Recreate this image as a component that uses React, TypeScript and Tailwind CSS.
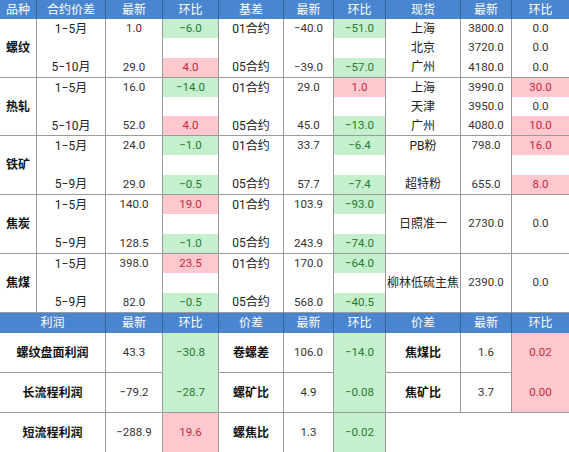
import React from "react";

type Tone = "g" | "r" | undefined;
type Val = { v: string; t?: Tone };
type Sub = [string, string, Val] | null;

interface Block {
  name: string;
  h: string;
  spread: Sub[];
  basis: Sub[];
  spot: Sub[];
  merged?: boolean;
}

const g = (v: string): Val => ({ v, t: "g" });
const r = (v: string): Val => ({ v, t: "r" });
const n = (v: string): Val => ({ v });

const blocks: Block[] = [
  {
    name: "螺纹",
    h: "h-[59px]",
    spread: [["1−5月", "1.0", g("−6.0")], null, ["5−10月", "29.0", r("4.0")]],
    basis: [["01合约", "−40.0", g("−51.0")], null, ["05合约", "−39.0", g("−57.0")]],
    spot: [
      ["上海", "3800.0", n("0.0")],
      ["北京", "3720.0", n("0.0")],
      ["广州", "4180.0", n("0.0")],
    ],
  },
  {
    name: "热轧",
    h: "h-[58px]",
    spread: [["1−5月", "16.0", g("−14.0")], null, ["5−10月", "52.0", r("4.0")]],
    basis: [["01合约", "29.0", r("1.0")], null, ["05合约", "45.0", g("−13.0")]],
    spot: [
      ["上海", "3990.0", r("30.0")],
      ["天津", "3950.0", n("0.0")],
      ["广州", "4080.0", r("10.0")],
    ],
  },
  {
    name: "铁矿",
    h: "h-[59px]",
    spread: [["1−5月", "24.0", g("−1.0")], null, ["5−9月", "29.0", g("−0.5")]],
    basis: [["01合约", "33.7", g("−6.4")], null, ["05合约", "57.7", g("−7.4")]],
    spot: [["PB粉", "798.0", r("16.0")], null, ["超特粉", "655.0", r("8.0")]],
  },
  {
    name: "焦炭",
    h: "h-[59px]",
    spread: [["1−5月", "140.0", r("19.0")], null, ["5−9月", "128.5", g("−1.0")]],
    basis: [["01合约", "103.9", g("−93.0")], null, ["05合约", "243.9", g("−74.0")]],
    spot: [["日照准一", "2730.0", n("0.0")]],
    merged: true,
  },
  {
    name: "焦煤",
    h: "h-[59px]",
    spread: [["1−5月", "398.0", r("23.5")], null, ["5−9月", "82.0", g("−0.5")]],
    basis: [["01合约", "170.0", g("−64.0")], null, ["05合约", "568.0", g("−40.5")]],
    spot: [["柳林低硫主焦", "2390.0", n("0.0")]],
    merged: true,
  },
];

// profit / ratio rows at the bottom
const lower: ([string, string, Val] | null)[][] = [
  [
    ["螺纹盘面利润", "43.3", g("−30.8")],
    ["卷螺差", "106.0", g("−14.0")],
    ["焦煤比", "1.6", r("0.02")],
  ],
  [
    ["长流程利润", "−79.2", g("−28.7")],
    ["螺矿比", "4.9", g("−0.08")],
    ["焦矿比", "3.7", r("0.00")],
  ],
  [["短流程利润", "−288.9", r("19.6")], ["螺焦比", "1.3", g("−0.02")], null],
];

const line = "border-[#9a9a9a]";

function toneClass(t: Tone) {
  if (t === "g") return "bg-[#c6efce] text-[#237a30]";
  if (t === "r") return "bg-[#ffc7ce] text-[#c8283c]";
  return "text-[#333]";
}

function Group({ cols, rows, merged, last }: { cols: string; rows: Sub[]; merged?: boolean; last?: boolean }) {
  const span = merged ? "row-span-3" : "";
  return (
    <div className={`grid ${cols} grid-rows-3`}>
      {rows.flatMap((row, i) => {
        const cells = row ?? ["", "", n("")];
        return [
          <div key={`${i}a`} className={`${span} border-r ${line} flex items-center justify-center text-[#222]`}>
            {cells[0]}
          </div>,
          <div key={`${i}b`} className={`${span} border-r ${line} flex items-center justify-center text-[11.5px] text-[#333]`}>
            {cells[1]}
          </div>,
          <div
            key={`${i}c`}
            className={`${span} ${last ? "" : `border-r ${line}`} flex items-center justify-center text-[11.5px] ${toneClass(cells[2].t)}`}
          >
            {cells[2].v}
          </div>,
        ];
      })}
    </div>
  );
}

function HeadCell({ label, w, last }: { label: string; w: string; last?: boolean }) {
  return (
    <div className={`${w} flex items-center justify-center ${last ? "" : "border-r border-[#3b639b]"}`}>{label}</div>
  );
}

function LowerCell({ cell, last, bottom }: { cell: [string, string, Val] | null; last?: boolean; bottom?: boolean }) {
  if (!cell) {
    return (
      <>
        <div />
        <div />
        <div />
      </>
    );
  }
  const [label, value, ch] = cell;
  const bb = bottom ? "" : "border-b";
  const chBorder = ch.t === "g" ? "border-b-[#c6efce]" : "border-b-[#ffc7ce]";
  return (
    <>
      <div className={`${bb} border-r ${line} flex items-center justify-center font-bold text-[#111]`}>{label}</div>
      <div className={`${bb} border-r ${line} flex items-center justify-center text-[11.5px] text-[#333]`}>{value}</div>
      <div
        className={`${bb} ${last ? "" : "border-r"} ${line} ${chBorder} flex items-center justify-center text-[11.5px] ${toneClass(ch.t)}`}
      >
        {ch.v}
      </div>
    </>
  );
}

export default function App() {
  return (
    <div className="w-[569px] h-[452px] overflow-hidden bg-white font-[Roboto,'Noto_Sans_CJK_SC',sans-serif] text-[12px] leading-none">
      {/* upper table header */}
      <div className="flex h-[19px] bg-[#4a86cf] text-white">
        <HeadCell label="品种" w="w-[37px]" />
        <HeadCell label="合约价差" w="w-[69px]" />
        <HeadCell label="最新" w="w-[57px]" />
        <HeadCell label="环比" w="w-[56px]" />
        <HeadCell label="基差" w="w-[65px]" />
        <HeadCell label="最新" w="w-[50px]" />
        <HeadCell label="环比" w="w-[52px]" />
        <HeadCell label="现货" w="w-[75px]" />
        <HeadCell label="最新" w="w-[51px]" />
        <HeadCell label="环比" w="w-[57px]" last />
      </div>

      {blocks.map((b) => (
        <div key={b.name} className={`flex ${b.h} border-b ${line}`}>
          <div className={`w-[37px] border-r ${line} flex items-center justify-center font-bold text-[#111]`}>
            {b.name}
          </div>
          <Group cols="grid-cols-[69px_57px_56px]" rows={b.spread} />
          <Group cols="grid-cols-[65px_50px_52px]" rows={b.basis} />
          <Group cols="grid-cols-[75px_51px_57px]" rows={b.spot} merged={b.merged} last />
        </div>
      ))}

      {/* lower table header */}
      <div className="flex h-[20px] bg-[#4a86cf] text-white">
        <HeadCell label="利润" w="w-[106px]" />
        <HeadCell label="最新" w="w-[57px]" />
        <HeadCell label="环比" w="w-[56px]" />
        <HeadCell label="价差" w="w-[65px]" />
        <HeadCell label="最新" w="w-[50px]" />
        <HeadCell label="环比" w="w-[52px]" />
        <HeadCell label="价差" w="w-[75px]" />
        <HeadCell label="最新" w="w-[51px]" />
        <HeadCell label="环比" w="w-[57px]" last />
      </div>

      {lower.map((row, i) => (
        <div
          key={i}
          className={`grid grid-cols-[106px_57px_56px_65px_50px_52px_75px_51px_57px] ${i === 2 ? "h-[39px]" : "h-[40px]"} ${
            i === 1 ? `border-b ${line}` : ""
          }`}
        >
          {row.map((cell, j) => (
            <LowerCell key={j} cell={cell} last={j === 2} bottom={i >= 1} />
          ))}
        </div>
      ))}
    </div>
  );
}
